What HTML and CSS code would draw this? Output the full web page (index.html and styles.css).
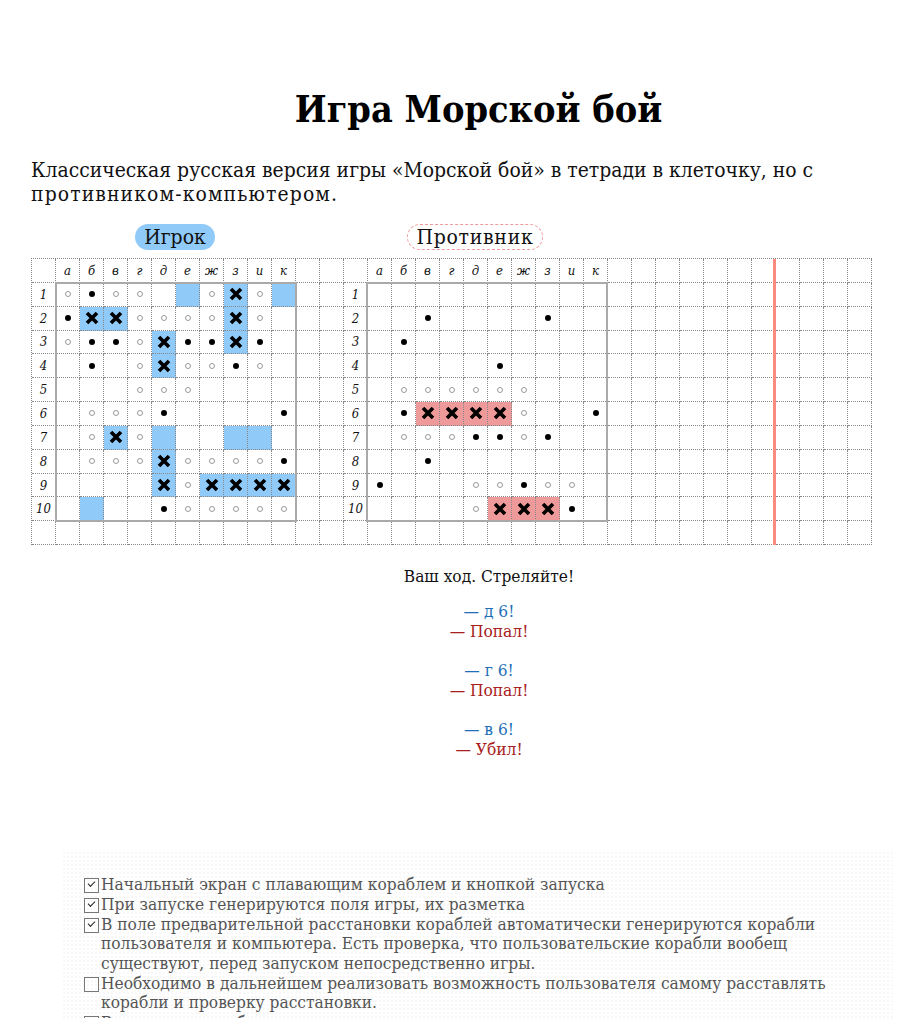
FILE: index.html
```html
<!doctype html>
<html lang="ru">
<head>
<meta charset="utf-8">
<title>Игра Морской бой</title>
<link rel="stylesheet" href="styles.css">
</head>
<body>
<h1 class="title">Игра Морской бой</h1>
<p class="lead">Классическая русская версия игры «Морской бой» в тетради в клеточку, но с <span class="lead-end">противником-компьютером.</span></p>

<div class="names">
  <span class="name name-player">Игрок</span>
  <span class="name name-enemy">Противник</span>
</div>

<div class="sheet" id="sheet"></div>

<div class="log">
  <p class="log-turn">Ваш ход. Стреляйте!</p>
  <p><span class="shot">— д 6!</span><br><span class="reply">— Попал!</span></p>
  <p><span class="shot">— г 6!</span><br><span class="reply">— Попал!</span></p>
  <p><span class="shot">— в 6!</span><br><span class="reply">— Убил!</span></p>
</div>

<ul class="todo">
  <li class="done">Начальный экран с плавающим кораблем и кнопкой запуска</li>
  <li class="done">При запуске генерируются поля игры, их разметка</li>
  <li class="done">В поле предварительной расстановки кораблей автоматически генерируются корабли пользователя и компьютера. Есть проверка, что пользовательские корабли вообещ существуют, перед запуском непосредственно игры.</li>
  <li>Необходимо в дальнейшем реализовать возможность пользователя самому расставлять корабли и проверку расстановки.</li>
  <li>Возможность выбора уровня сложности</li>
</ul>

<script src="game.js"></script>
</body>
</html>
```

FILE: styles.css
```css
* { box-sizing: border-box; }
body {
	margin: 0;
	font-family: "DejaVu Serif Condensed", "DejaVu Serif", "Liberation Serif", serif;
	color: #111;
	background: #fff;
	overflow-x: hidden;
}
.title {
	margin: 0;
	padding: 84px 0 0 57px;
	font-size: 37.5px;
	line-height: 50px;
	color: #000;
	text-align: center;
}
.lead {
	margin: 24px 0 0;
	padding: 0 60px 0 31px;
	font-size: 20.9px;
	line-height: 24px;
}
.lead-end { letter-spacing: 1.1px; }

.names {
	display: flex;
	margin-top: 18px;
	padding-left: 135px;
	font-size: 21px;
}
.name {
	height: 26px;
	border-radius: 13px;
}
.name-player {
	width: 80px;
	line-height: 26px;
	text-align: center;
	background: #90caf9;
}
.name-enemy {
	width: 136px;
	margin-left: 192px;
	border: 1px dashed #ef9a9a;
	line-height: 24px;
	letter-spacing: 0.7px;
	text-align: center;
}

.sheet {
	display: grid;
	grid-template-columns: repeat(35, 24px);
	grid-auto-rows: 23.85px;
	position: relative;
	width: 841px;
	margin: 8px 0 0 31px;
	border-top: 1px dotted #888;
	border-left: 1px dotted #888;
}
.cell {
	display: flex;
	align-items: center;
	justify-content: center;
	border-right: 1px dotted #888;
	border-bottom: 1px dotted #888;
}
.label {
	font-size: 13px;
	font-style: italic;
}
.ship { background: #90caf9; }
.enemy-ship { background: #ef9a9a; }
.dot {
	width: 6px;
	height: 6px;
	border-radius: 50%;
	background: #000;
}
.miss {
	width: 6px;
	height: 6px;
	border-radius: 50%;
	border: 1px solid #999;
}
.cross {
	width: 14px;
	height: 14px;
	stroke: #000;
	stroke-width: 3.6;
}
.field {
	position: absolute;
	top: 23px;
	width: 242px;
	height: 240px;
	border: 2px solid #aaa;
}
.field-player { left: 23px; }
.field-enemy { left: 334px; }
.margin-line {
	position: absolute;
	top: 0;
	left: 741px;
	width: 3px;
	height: 286px;
	background: #ff8a80;
}

.log {
	padding: 21px 0 0 78px;
	font-size: 17.2px;
	line-height: 20px;
	text-align: center;
}
.log p { margin: 0 0 19px; }
.log .log-turn { margin-bottom: 15px; }
.shot { color: #1e6fb8; }
.reply { color: #a82020; }

.todo {
	width: 831px;
	margin: 92px 0 0 62px;
	padding: 24px 50px 0 39px;
	list-style: none;
	font-size: 17.2px;
	line-height: 19.7px;
	color: #555;
	background-image: radial-gradient(#eee 0.6px, transparent 0.8px);
	background-size: 4px 4px;
}
.todo li {
	position: relative;
}
.todo li::before {
	content: "";
	position: absolute;
	left: -17px;
	top: 3px;
	width: 13px;
	height: 13px;
	border: 1px solid #777;
}
.todo .done::after {
	content: "";
	position: absolute;
	left: -13.5px;
	top: 6px;
	width: 6px;
	height: 3px;
	border-left: 1.5px solid #222;
	border-bottom: 1.5px solid #222;
	transform: rotate(-45deg);
}
```

FILE: game.js
```js
// S ship, X hit ship, * hit water, o marked empty
var player = [
	"o*oo.SoXoS",
	"*XXooooXo.",
	"o**oX**X*.",
	".*.oXoo*o.",
	"...ooo....",
	".ooo*....*",
	".oXoS..SS.",
	".oooXoooo*",
	"....XoXXXX",
	".S..*ooooo"
];
var enemy = [
	"..........",
	"..*....*..",
	".*........",
	".....*....",
	".oooooo...",
	".*XXXXo..*",
	".ooo**o*..",
	"..*.......",
	"*...oo*oo.",
	"....oXXX*."
];
var letters = "абвгдежзик";
var sheet = document.getElementById("sheet");
var cross = '<svg class="cross" viewBox="0 0 14 14"><path d="M2 2L12 12M12 2L2 12"/></svg>';

function mark(cell, ch, shipClass) {
	if (ch == "S") cell.classList.add(shipClass);
	if (ch == "X") {
		cell.classList.add(shipClass);
		cell.innerHTML = cross;
	}
	if (ch == "*") cell.innerHTML = '<span class="dot"></span>';
	if (ch == "o") cell.innerHTML = '<span class="miss"></span>';
}

function boardCell(cell, board, shipClass, row, col) {
	if (row == 0 && col > 0) {
		cell.classList.add("label");
		cell.textContent = letters[col - 1];
	} else if (row > 0 && col == 0) {
		cell.classList.add("label");
		cell.textContent = row;
	} else if (row > 0) {
		mark(cell, board[row - 1][col - 1], shipClass);
	}
}

for (var r = 0; r < 12; r++) {
	for (var c = 0; c < 35; c++) {
		var cell = document.createElement("div");
		cell.className = "cell";
		if (r < 11 && c < 11) boardCell(cell, player, "ship", r, c);
		if (r < 11 && c >= 13 && c < 24) boardCell(cell, enemy, "enemy-ship", r, c - 13);
		sheet.appendChild(cell);
	}
}

["field field-player", "field field-enemy", "margin-line"].forEach(function (name) {
	var el = document.createElement("div");
	el.className = name;
	sheet.appendChild(el);
});
```
